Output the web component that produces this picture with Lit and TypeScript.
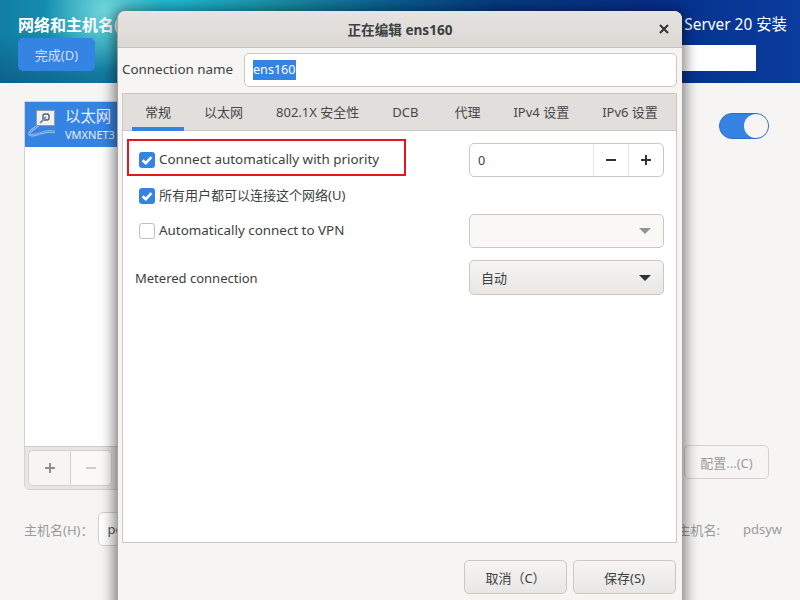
import { LitElement, html, css } from "lit";
import { customElement } from "lit/decorators.js";

const check = html`<svg viewBox="0 0 16 16" width="16" height="16"><path d="M3.6 8.2 L6.8 11.2 L12.4 5.2" fill="none" stroke="#fff" stroke-width="2.6"/></svg>`;

@customElement("app-root")
export class AppRoot extends LitElement {
  static styles = css`
    :host {
      display: block;
      position: relative;
      width: 800px;
      height: 600px;
      overflow: hidden;
      background: #f6f5f4;
      color: #3a3f41;
      font-family: "Noto Sans", "Noto Sans CJK SC", sans-serif;
      font-size: 13.4px;
    }

    /* installer page behind the dialog */
    .header {
      height: 83px;
      box-sizing: border-box;
      display: flex;
      justify-content: space-between;
      padding: 14px 13px 0 18px;
      color: #fff;
      background:
        radial-gradient(circle at 105px 10px, rgba(134, 226, 226, 0.8) 0, rgba(70, 190, 205, 0) 60px),
        linear-gradient(to top, rgba(8, 60, 110, 0.45), rgba(8, 60, 110, 0) 60%) 0 0 / 120px 100% no-repeat,
        linear-gradient(90deg, #127ea4 0, #1a9cb8 90px, #1fbcd4 170px, #1a8fa8 280px, #0a5a90 400px, #063a80 500px, #05308a 650px, #0a3c9e 100%);
    }
    .header-left {
      display: flex;
      flex-direction: column;
      gap: 2px;
    }
    .page-title {
      font-size: 16px;
      font-weight: 700;
      line-height: 22px;
      white-space: nowrap;
    }
    .done {
      width: 77px;
      height: 33px;
      border-radius: 5px;
      background: #3584e4;
      color: #cfe0f7;
      font-size: 13px;
      display: flex;
      align-items: center;
      justify-content: center;
    }
    .header-right {
      display: flex;
      flex-direction: column;
      align-items: flex-end;
    }
    .product {
      font-size: 15.4px;
      line-height: 22px;
      margin-bottom: 9px;
      white-space: nowrap;
    }
    .kbd {
      width: 130px;
      height: 26px;
      background: #fff;
      margin-right: 31px;
    }
    .main {
      display: grid;
      grid-template-columns: 240px 1fr;
      padding: 18px 31px 0 24px;
      height: 389px;
    }
    .list {
      display: flex;
      flex-direction: column;
      border: 1px solid #d5d2cd;
      border-radius: 0 0 5px 5px;
      height: 389px;
      box-sizing: border-box;
      background: #fff;
    }
    .row {
      height: 45px;
      box-sizing: border-box;
      background: #3584e4;
      color: #e6eefa;
      display: flex;
      align-items: center;
      gap: 5px;
      padding-left: 3px;
    }
    .row svg {
      flex: none;
    }
    .row-name {
      font-size: 15.4px;
      line-height: 20px;
    }
    .row-sub {
      font-size: 11px;
      line-height: 14px;
      margin-top: 1px;
    }
    .list-body {
      flex: 1;
    }
    .list-tools {
      height: 43px;
      box-sizing: border-box;
      background: #e8e6e3;
      border-top: 1px solid #cfccc7;
      padding: 3px 3px;
      display: flex;
    }
    .tool {
      width: 42px;
      height: 36px;
      box-sizing: border-box;
      border: 1px solid #d5d2cd;
      background: #f6f5f4;
      display: flex;
      align-items: center;
      justify-content: center;
    }
    .tool:first-child {
      border-radius: 5px 0 0 5px;
      border-right: 0;
    }
    .tool.off {
      background: #faf9f8;
      border-radius: 0 5px 5px 0;
    }
    .side {
      display: flex;
      flex-direction: column;
      justify-content: space-between;
      align-items: flex-end;
      padding: 12px 0 11px;
    }
    .switch {
      width: 50px;
      height: 26px;
      box-sizing: border-box;
      border: 1px solid #2a6cc0;
      border-radius: 13px;
      background: #3584e4;
      display: flex;
      justify-content: flex-end;
    }
    .knob {
      width: 24px;
      height: 24px;
      border-radius: 50%;
      background: #f6f5f4;
    }
    .config {
      width: 85px;
      height: 34px;
      box-sizing: border-box;
      border: 1px solid #d5d2cd;
      border-radius: 5px;
      color: #999b9c;
      font-size: 13px;
      display: flex;
      align-items: center;
      justify-content: center;
    }
    .host {
      display: flex;
      justify-content: space-between;
      align-items: center;
      padding: 22px 18px 0 24px;
      color: #999b9c;
      font-size: 13px;
    }
    .host-left,
    .host-right {
      display: flex;
      align-items: center;
    }
    .host-input {
      margin-left: 5px;
      width: 120px;
      height: 34px;
      box-sizing: border-box;
      border: 1px solid #d5d2cd;
      border-radius: 5px;
      background: #fff;
      color: #555;
      padding-left: 8px;
      line-height: 32px;
    }
    .host-name {
      margin-left: 23px;
    }

    /* dialog window */
    .dialog {
      position: absolute;
      left: 117px;
      top: 11px;
      width: 565px;
      height: 600px;
      box-sizing: border-box;
      background: #f6f5f4;
      border-radius: 8px 8px 0 0;
      border-left: 1px solid #a5a39f;
      box-shadow: 0 2px 14px 3px rgba(0, 0, 0, 0.5);
      display: flex;
      flex-direction: column;
    }
    .titlebar {
      height: 37px;
      flex: none;
      box-sizing: border-box;
      background: linear-gradient(#e6e3e0, #dbd8d4);
      border-bottom: 1px solid #c4c1bb;
      border-radius: 8px 8px 0 0;
      display: flex;
      align-items: center;
      justify-content: center;
      position: relative;
      font-weight: 700;
      font-size: 13.6px;
    }
    .close {
      position: absolute;
      right: 13px;
      top: 13px;
      width: 10px;
      height: 10px;
    }
    .name-row {
      display: flex;
      align-items: center;
      gap: 12px;
      height: 34px;
      margin: 5px 5px 6px 4px;
      flex: none;
    }
    .name-label {
      width: 110px;
      white-space: nowrap;
      margin-top: -2px;
    }
    .name-input {
      flex: 1;
      height: 34px;
      box-sizing: border-box;
      border: 1px solid #cdc7c2;
      border-radius: 5px;
      background: #fff;
      display: flex;
      align-items: center;
      padding-left: 8px;
    }
    .selected {
      background: #3584e4;
      color: #fff;
      font-size: 12.6px;
      line-height: 20px;
      margin-top: -1px;
    }
    .notebook {
      margin: 0 5px 0 4px;
      height: 450px;
      flex: none;
      box-sizing: border-box;
      border: 1px solid #cdc7c2;
      background: #fff;
      display: flex;
      flex-direction: column;
    }
    .tabs {
      height: 37px;
      flex: none;
      box-sizing: border-box;
      background: #e1dedb;
      border-bottom: 1px solid #cdc7c2;
      display: flex;
      gap: 7px;
      padding-left: 9px;
    }
    .tab {
      padding: 0 13px;
      line-height: 36px;
      height: 36px;
      box-sizing: border-box;
      color: #45494b;
      white-space: nowrap;
      font-size: 13px;
    }
    .tab.dcb {
      padding-right: 16px;
    }
    .tab.active {
      border-bottom: 4px solid #3584e4;
      height: 37px;
      color: #3a3f41;
    }
    .form {
      position: relative;
      display: grid;
      grid-template-columns: 1fr 195px;
      grid-template-rows: 34px 19px 34px 38px;
      row-gap: 9px;
      align-items: center;
      padding: 12px 12px 0 12px;
    }
    .check {
      display: flex;
      align-items: center;
      gap: 4px;
      margin-left: 4px;
      white-space: nowrap;
    }
    .check-text {
      margin-top: -2px;
    }
    .check-text.cjk {
      font-size: 13px;
    }
    .box {
      width: 16px;
      height: 16px;
      box-sizing: border-box;
      border-radius: 3px;
      background: #3584e4;
      flex: none;
    }
    .box svg {
      display: block;
    }
    .box.empty {
      background: #fff;
      border: 1px solid #c4bfba;
    }
    .annotation {
      position: absolute;
      left: 4px;
      top: 8px;
      width: 279px;
      height: 37px;
      box-sizing: border-box;
      border: 2px solid #e3151f;
    }
    .spin {
      height: 34px;
      box-sizing: border-box;
      border: 1px solid #cdc7c2;
      border-radius: 5px;
      display: flex;
      align-items: center;
    }
    .spin-value {
      flex: 1;
      padding-left: 8px;
      font-size: 12.6px;
    }
    .spin-btn {
      width: 34px;
      height: 32px;
      border-left: 1px solid #e8e6e3;
      display: flex;
      align-items: center;
      justify-content: center;
    }
    .select {
      height: 34px;
      box-sizing: border-box;
      border: 1px solid #cdc7c2;
      border-radius: 5px;
      background: #f9f8f6;
      font-size: 13px;
      display: flex;
      align-items: center;
      justify-content: space-between;
      padding: 0 12px 0 11px;
    }
    .select.combo {
      height: 35px;
      background: linear-gradient(#f6f5f4, #e9e7e4);
    }
    .arrow {
      width: 0;
      height: 0;
      border-left: 6px solid transparent;
      border-right: 6px solid transparent;
      border-top: 6px solid #2e3436;
    }
    .arrow.dim {
      border-top-color: #929595;
    }
    .metered {
      grid-row: 4;
      align-self: end;
      line-height: 34px;
      font-size: 13px;
    }
    .combo-cell {
      grid-row: 4;
      grid-column: 2;
      align-self: end;
    }
    .actions {
      display: flex;
      justify-content: flex-end;
      gap: 6px;
      padding: 17px 6px 0 0;
    }
    .btn {
      width: 103px;
      height: 34px;
      box-sizing: border-box;
      border: 1px solid #cdc7c2;
      border-radius: 5px;
      background: linear-gradient(#f6f5f4, #e9e7e4);
      font-size: 13px;
      display: flex;
      align-items: center;
      justify-content: center;
      white-space: pre;
    }
  `;

  render() {
    return html`
      <div class="header">
        <div class="header-left">
          <div class="page-title">网络和主机名(N)</div>
          <div class="done">完成(D)</div>
        </div>
        <div class="header-right">
          <div class="product">Server 20 安装</div>
          <div class="kbd"></div>
        </div>
      </div>
      <div class="main">
        <div class="list">
          <div class="row">
            <svg width="32" height="32" viewBox="0 0 32 32">
              <path d="M19 9 L3 22 C0 25 2 27 6 26 C12 25 18 21 27 23" fill="none" stroke="#a9c6ea" stroke-width="2.4"/>
              <path d="M19 9 L3 22 C0 25 2 27 6 26 C12 25 18 21 27 23" fill="none" stroke="#3f7fd0" stroke-width="0.8"/>
              <rect x="8.5" y="1.5" width="18" height="15" fill="#f1f1ef" stroke="#8f9ba8"/>
              <rect x="15" y="5" width="6" height="6" rx="2" fill="none" stroke="#555c63" stroke-width="1.4"/>
              <path d="M18 8 L12 14" stroke="#6d93c6" stroke-width="2"/>
            </svg>
            <div>
              <div class="row-name">以太网</div>
              <div class="row-sub">VMXNET3</div>
            </div>
          </div>
          <div class="list-body"></div>
          <div class="list-tools">
            <div class="tool">
              <svg width="12" height="12" viewBox="0 0 12 12"><path d="M1 6 H11 M6 1 V11" stroke="#8e9192" stroke-width="2"/></svg>
            </div>
            <div class="tool off">
              <svg width="12" height="12" viewBox="0 0 12 12"><path d="M1 6 H11" stroke="#d0cdc8" stroke-width="2"/></svg>
            </div>
          </div>
        </div>
        <div class="side">
          <div class="switch"><div class="knob"></div></div>
          <div class="config">配置...(C)</div>
        </div>
      </div>
      <div class="host">
        <div class="host-left">主机名(H)：<div class="host-input">pdsyw</div></div>
        <div class="host-right">当前主机名:<span class="host-name">pdsyw</span></div>
      </div>

      <div class="dialog">
        <div class="titlebar">
          正在编辑 ens160
          <svg class="close" viewBox="0 0 10 10"><path d="M1 1 L9 9 M9 1 L1 9" stroke="#2e3436" stroke-width="2"/></svg>
        </div>
        <div class="name-row">
          <div class="name-label">Connection name</div>
          <div class="name-input"><span class="selected">ens160</span></div>
        </div>
        <div class="notebook">
          <div class="tabs">
            <div class="tab active">常规</div>
            <div class="tab">以太网</div>
            <div class="tab">802.1X 安全性</div>
            <div class="tab dcb">DCB</div>
            <div class="tab">代理</div>
            <div class="tab">IPv4 设置</div>
            <div class="tab">IPv6 设置</div>
          </div>
          <div class="form">
            <div class="check"><span class="box">${check}</span><span class="check-text">Connect automatically with priority</span></div>
            <div class="spin">
              <div class="spin-value">0</div>
              <div class="spin-btn">
                <svg width="12" height="12" viewBox="0 0 12 12"><path d="M1 6 H11" stroke="#2e3436" stroke-width="2"/></svg>
              </div>
              <div class="spin-btn">
                <svg width="12" height="12" viewBox="0 0 12 12"><path d="M1 6 H11 M6 1 V11" stroke="#2e3436" stroke-width="2"/></svg>
              </div>
            </div>
            <div class="check"><span class="box">${check}</span><span class="check-text cjk">所有用户都可以连接这个网络(U)</span></div>
            <div></div>
            <div class="check"><span class="box empty"></span><span class="check-text">Automatically connect to VPN</span></div>
            <div class="select"><span></span><span class="arrow dim"></span></div>
            <div class="metered">Metered connection</div>
            <div class="combo-cell">
              <div class="select combo"><span>自动</span><span class="arrow"></span></div>
            </div>
            <div class="annotation"></div>
          </div>
        </div>
        <div class="actions">
          <div class="btn">取消（C）</div>
          <div class="btn">保存(S)</div>
        </div>
      </div>
    `;
  }
}
